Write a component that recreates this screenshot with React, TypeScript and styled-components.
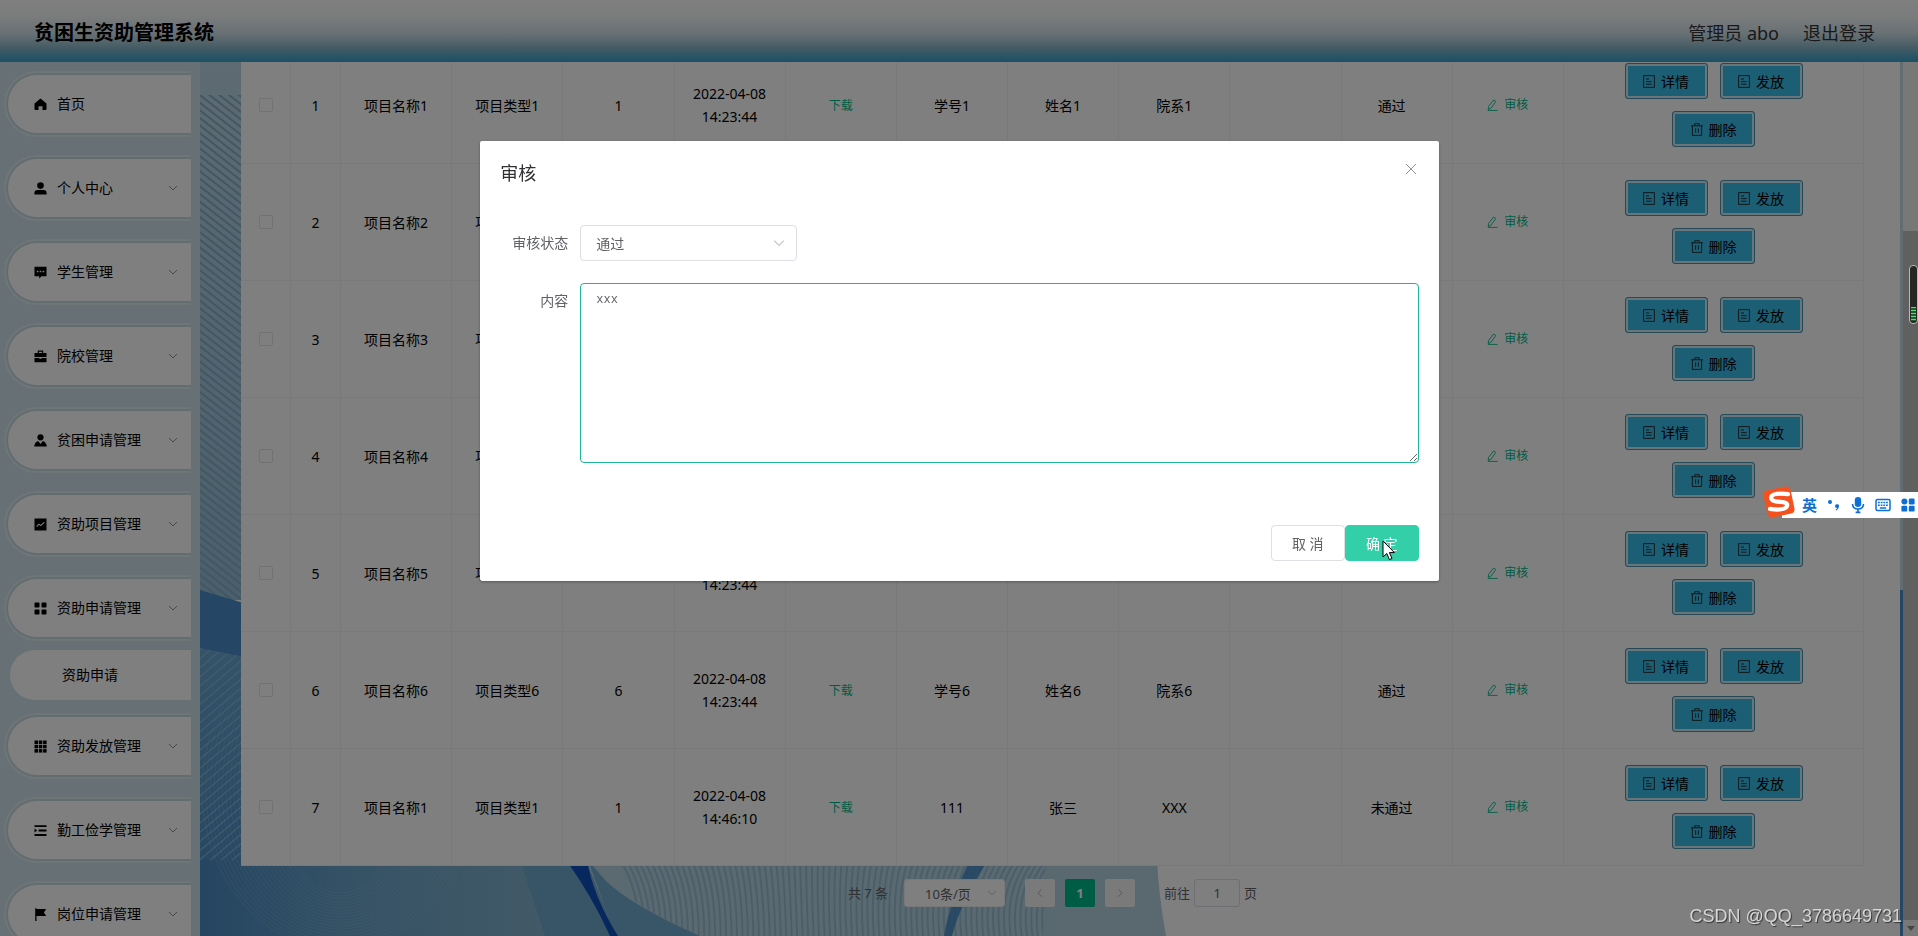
import React from 'react';
import styled, { createGlobalStyle, css } from 'styled-components';

const GlobalStyle = createGlobalStyle`
  *, *::before, *::after { box-sizing: border-box; }
  body {
    margin: 0;
    background: #fff;
    color: #000;
    font-family: "Noto Sans", "Noto Sans CJK SC", sans-serif;
    font-size: 14px;
    overflow: hidden;
  }
  button, input, select, textarea { font: inherit; color: inherit; margin: 0; }
  a { color: inherit; text-decoration: none; }
`;

/* ---------- frame ---------- */

const Shell = styled.div`
  display: flex;
  height: 100vh;
  overflow: hidden;
`;

const Header = styled.header`
  position: fixed;
  top: 0;
  left: 0;
  right: 0;
  z-index: 2;
  height: 62px;
  padding: 3px 43px 0 34px;
  display: flex;
  align-items: center;
  justify-content: space-between;
  background: linear-gradient(180deg, #fff 0%, #f4f6f7 28%, #d3e2e9 54%, #86b6c8 78%, #40a6c8 96%, #3aa4c8 100%);
`;

const Brand = styled.h1`
  margin: 0;
  font-size: 20px;
  line-height: 30px;
  font-weight: 700;
`;

const Account = styled.div`
  display: flex;
  gap: 24px;
  font-size: 18px;
  line-height: 30px;
  color: #333;
`;

const Sidebar = styled.nav`
  flex: 0 0 200px;
  padding: 71px 9px 0 4px;
  overflow: hidden;
  background: #cfe2ea;
`;

const Menu = styled.ul`
  list-style: none;
  margin: 0;
  padding: 0;
  display: flex;
  flex-direction: column;
  gap: 18px;
`;

const MenuRing = styled.div`
  padding: 2px 0 2px 2px;
  border: solid #dfecf1;
  border-width: 2px 0 2px 2px;
  border-radius: 33px 0 0 33px;
  background: #c6d8df;
`;

const MenuLink = styled.a`
  display: flex;
  align-items: center;
  height: 58px;
  padding: 0 13px 0 26px;
  border-radius: 29px 0 0 29px;
  background: #fff;
  svg { flex: none; }
`;

const MenuText = styled.span`
  flex: 1;
  margin-left: 10px;
  line-height: 22px;
`;

const SubLink = styled.a`
  display: flex;
  align-items: center;
  height: 50px;
  margin: 9px 0 -5px 6px;
  padding: 0 0 2px 52px;
  border-radius: 25px 0 0 25px;
  background: #fff;
`;

const Main = styled.main`
  position: relative;
  flex: 1;
  min-width: 0;
  padding: 47px 39px 0 41px;
`;

const Backdrop = styled.svg`
  position: absolute;
  inset: 0;
  width: 100%;
  height: 100%;
`;

const Content = styled.section`
  position: relative;
`;

/* ---------- table ---------- */

const Grid = styled.table`
  width: 100%;
  table-layout: fixed;
  border-collapse: separate;
  border-spacing: 0;
  background: #fff;
`;

const Col = styled.col<{ $w?: number }>`
  ${p => p.$w && css`width: ${p.$w}px;`}
`;

const Cell = styled.td`
  height: 117px;
  padding: 0 10px;
  border: solid #f1f2f4;
  border-width: 0 1px 1px 0;
  text-align: center;
  vertical-align: middle;
  line-height: 23px;
`;

const StatusCell = styled(Cell)`
  padding-right: 20px;
`;

const RowCheck = styled.input`
  appearance: none;
  display: block;
  width: 14px;
  height: 14px;
  margin: 0 auto;
  border: 1px solid #e2e4e8;
  border-radius: 2px;
  background: #fff;
`;

const TextButton = styled.button`
  display: inline-flex;
  align-items: center;
  gap: 5px;
  padding: 0;
  border: 0;
  background: none;
  font-size: 12px;
  line-height: 23px;
  color: #00b98a;
`;

const Actions = styled.div`
  display: flex;
  flex-wrap: wrap;
  justify-content: center;
  gap: 12px;
  padding: 0 40px;
`;

const ActionButton = styled.button`
  display: inline-flex;
  align-items: center;
  justify-content: center;
  gap: 6px;
  width: 83px;
  height: 36px;
  padding: 0;
  border: 1px solid #4b93ad;
  border-radius: 3px;
  background: #38bce9;
  box-shadow: inset 0 0 0 2px #d5eaf2;
`;

/* ---------- pagination ---------- */

const Pager = styled.div`
  display: flex;
  align-items: center;
  justify-content: center;
  padding-top: 13px;
  font-size: 13px;
  line-height: 28px;
  color: #606266;
`;

const SizeBox = styled.div`
  position: relative;
  display: flex;
  margin: 0 20px 0 16px;
`;

const SizeSelect = styled.select`
  appearance: none;
  width: 101px;
  height: 28px;
  padding: 0 0 0 20px;
  border: 1px solid #f0f0f0;
  border-radius: 3px;
  background: #fff;
`;

const ArrowSlot = styled.span<{ $right: number }>`
  position: absolute;
  top: 0;
  bottom: 0;
  right: ${p => p.$right}px;
  display: flex;
  align-items: center;
  pointer-events: none;
`;

const PageButton = styled.button<{ $active?: boolean }>`
  display: flex;
  align-items: center;
  justify-content: center;
  width: 30px;
  height: 28px;
  margin-right: 10px;
  padding: 0;
  border: 0;
  border-radius: 2px;
  background: ${p => (p.$active ? '#00ba8b' : '#f4f4f5')};
  color: ${p => (p.$active ? '#fff' : '#c0c4cc')};
  font-weight: 700;
`;

const Jump = styled.label`
  display: flex;
  align-items: center;
  gap: 4px;
  margin-left: 19px;
`;

const JumpInput = styled.input`
  width: 46px;
  height: 28px;
  padding: 0;
  border: 1px solid #dcdfe6;
  border-radius: 3px;
  background: #fff;
  text-align: center;
`;

/* ---------- scroll track ---------- */

const Track = styled.div`
  flex: 0 0 15px;
  margin-top: 62px;
  padding-top: 169px;
  display: flex;
  flex-direction: column;
  background: #f1f1f1;
`;

const Thumb = styled.div`
  flex: 1;
  background: #c1c1c1;
`;

const TrackEnd = styled.div`
  display: flex;
  align-items: center;
  justify-content: center;
  height: 16px;
`;

/* ---------- dialog ---------- */

const Mask = styled.div`
  position: fixed;
  inset: 0;
  z-index: 3;
  padding: 1px 0 0 1px;
  background: rgba(0, 0, 0, 0.5);
`;

const Dialog = styled.section`
  width: 50%;
  margin: 15vh auto 0;
  border-radius: 2px;
  background: #fff;
  box-shadow: 0 1px 3px rgba(0, 0, 0, 0.3);
`;

const DialogHead = styled.header`
  display: flex;
  justify-content: space-between;
  padding: 20px 20px 10px;
`;

const DialogTitle = styled.h2`
  margin: 0;
  font-size: 18px;
  line-height: 24px;
  font-weight: 400;
  color: #303133;
`;

const CloseButton = styled.button`
  display: flex;
  width: 16px;
  height: 16px;
  padding: 0;
  border: 0;
  background: none;
  color: #909399;
`;

const DialogBody = styled.form`
  display: flex;
  flex-direction: column;
  gap: 22px;
  padding: 30px 20px 52px;
  color: #606266;
`;

const Field = styled.div`
  display: flex;
`;

const FieldLabel = styled.label`
  flex: 0 0 80px;
  padding-right: 12px;
  text-align: right;
  line-height: 36px;
`;

const SelectBox = styled.div`
  position: relative;
  width: 217px;
`;

const StatusSelect = styled.select`
  appearance: none;
  width: 100%;
  height: 36px;
  padding: 0 15px;
  border: 1px solid #dcdfe6;
  border-radius: 4px;
  background: #fff;
`;

const Note = styled.textarea`
  flex: 1;
  display: block;
  height: 180px;
  padding: 6px 15px;
  border: 1px solid #1fb594;
  border-radius: 4px;
  outline: 0;
  resize: vertical;
  font-family: "Liberation Mono", monospace;
  font-size: 12px;
  line-height: 21px;
`;

const DialogFoot = styled.footer`
  display: flex;
  justify-content: flex-end;
  padding: 10px 20px 20px;
`;

const FootButton = styled.button<{ $primary?: boolean }>`
  width: 74px;
  height: 36px;
  padding: 0;
  border: 1px solid ${p => (p.$primary ? '#33cfa8' : '#dcdfe6')};
  border-radius: 4px;
  background: ${p => (p.$primary ? '#33cfa8' : '#fff')};
  color: ${p => (p.$primary ? '#fff' : '#606266')};
`;

/* ---------- floating desktop pieces ---------- */

const Pointer = styled.svg`
  position: fixed;
  left: 1382px;
  top: 540px;
  z-index: 5;
`;

const InputBar = styled.div`
  position: fixed;
  right: 0;
  top: 485px;
  z-index: 5;
  display: flex;
  align-items: flex-end;
`;

const InputLogo = styled.svg`
  position: relative;
  z-index: 1;
  margin-right: -14px;
`;

const InputTools = styled.div`
  display: flex;
  align-items: center;
  gap: 10px;
  height: 26px;
  margin-bottom: 1px;
  padding: 0 3px 0 20px;
  background: #fff;
  color: #0b6fd6;
  font-size: 15px;
  line-height: 26px;
  font-weight: 700;
`;

const Gauge = styled.div`
  position: fixed;
  right: 0;
  top: 265px;
  z-index: 5;
  width: 9px;
  height: 59px;
  padding: 41px 1px 1px;
  border: 1px solid #b8b8b8;
  border-radius: 4px;
  background: #262626;
`;

const GaugeFill = styled.div`
  height: 14px;
  background: repeating-linear-gradient(180deg, #5fd67a 0 1px, #1f5c2c 1px 3px);
`;

const Watermark = styled.div`
  position: fixed;
  right: 16px;
  bottom: 7px;
  z-index: 5;
  font-family: "Liberation Sans", sans-serif;
  font-size: 18px;
  line-height: 26px;
  color: rgba(225, 225, 225, 0.9);
  text-shadow: 1px 1px 1px rgba(0, 0, 0, 0.6);
`;

/* ---------- icons ---------- */

const menuShapes: Record<string, React.ReactNode> = {
  home: <path d="M6.5 0.5 L12.5 5.5 V11 Q12.5 12 11.5 12 H8.5 V8.2 H4.5 V12 H1.5 Q0.5 12 0.5 11 V5.5 Z" />,
  user: (
    <>
      <circle cx="6.5" cy="3.6" r="3.3" />
      <path d="M0.4 12.4 V11 Q0.4 8 3.6 8 H9.4 Q12.6 8 12.6 11 V12.4 Z" />
    </>
  ),
  comment: (
    <>
      <path d="M0.5 0.8 H12.5 V10.2 H7.4 L5.2 12.4 V10.2 H0.5 Z" />
      <path d="M2.8 4.7 h1.6 v1.6 h-1.6z M5.7 4.7 h1.6 v1.6 h-1.6z M8.6 4.7 h1.6 v1.6 h-1.6z" fill="#fff" />
    </>
  ),
  briefcase: (
    <path
      fillRule="evenodd"
      d="M3.8 0.6 H9.2 V3 H12.5 V7 H0.5 V3 H3.8 Z M4.9 1.7 V3 H8.1 V1.7 Z M0.5 7.9 H5.4 V8.8 H7.6 V7.9 H12.5 V12.2 H0.5 Z"
    />
  ),
  custom: (
    <>
      <circle cx="6.5" cy="3.3" r="3.1" />
      <path d="M0.2 12.5 Q0.6 8.2 4.2 7 L6.5 10 L8.8 7 Q12.4 8.2 12.8 12.5 Z" />
    </>
  ),
  marketing: (
    <>
      <path d="M0.5 0.5 H12.5 V12.5 H0.5 Z" />
      <path d="M2.6 8.6 L5 6.2 L6.8 7.6 L10.4 4.2" fill="none" stroke="#fff" strokeWidth="1.1" />
    </>
  ),
  menu: (
    <path d="M0.5 1.3q0-.8.8-.8h3.4q.8 0 .8.8v3.4q0 .8-.8.8h-3.4q-.8 0-.8-.8z M7.5 1.3q0-.8.8-.8h3.4q.8 0 .8.8v3.4q0 .8-.8.8h-3.4q-.8 0-.8-.8z M0.5 8.3q0-.8.8-.8h3.4q.8 0 .8.8v3.4q0 .8-.8.8h-3.4q-.8 0-.8-.8z M7.5 8.3q0-.8.8-.8h3.4q.8 0 .8.8v3.4q0 .8-.8.8h-3.4q-.8 0-.8-.8z" />
  ),
  grid: (
    <>
      {[0.5, 4.8, 9.1].map(y =>
        [0.5, 4.8, 9.1].map(x => <rect key={`${x}-${y}`} x={x} y={y} width="3.5" height="3.5" />),
      )}
    </>
  ),
  operation: <path d="M0.5 1.2h12v1.9h-12z M4.6 5.6h7.9v1.8h-7.9z M0.5 10h12v1.9h-12z M0.5 4.6 L3.2 6.5 L0.5 8.4z" />,
  flag: <path d="M1.2 0.2 h1.3 v0.8 H12.2 L9.9 4.4 L12.2 8 H2.5 V13 H1.2 Z" />,
};

const MenuIcon = ({ name }: { name: string }) => (
  <svg width="13" height="13" viewBox="0 0 13 13" aria-hidden="true">
    {menuShapes[name]}
  </svg>
);

const Chevron = ({ dir = 'down', size = 10, color = '#909399' }: { dir?: string; size?: number; color?: string }) => {
  const d = dir === 'down' ? 'M1 3 L5 7 L9 3' : dir === 'left' ? 'M6.5 1.5 L3 5 L6.5 8.5' : 'M3.5 1.5 L7 5 L3.5 8.5';
  return (
    <svg width={size} height={size} viewBox="0 0 10 10" fill="none" stroke={color} aria-hidden="true">
      <path d={d} />
    </svg>
  );
};

const DocIcon = () => (
  <svg width="12" height="13" viewBox="0 0 12 13" fill="none" stroke="#222" strokeWidth="0.9" aria-hidden="true">
    <path d="M0.6 0.6 H11.4 V12.4 H0.6 Z M3 4 H6 M3 6.6 H8.6 M3 9.2 H8.6" />
  </svg>
);

const BinIcon = () => (
  <svg width="12" height="13" viewBox="0 0 12 13" fill="none" stroke="#222" strokeWidth="0.9" aria-hidden="true">
    <path d="M0 2.8 H12 M3.8 2.6 V0.7 H8.2 V2.6 M1.4 2.8 V12.4 H10.6 V2.8 M4.6 5.4 V9.8 M7.4 5.4 V9.8" />
  </svg>
);

const PenIcon = () => (
  <svg width="12" height="12" viewBox="0 0 12 12" fill="none" stroke="currentColor" strokeWidth="0.9" aria-hidden="true">
    <path d="M6.6 1 L8.8 2.4 L4.2 9 L1.2 10.6 L1.6 7.4 Z M0.8 11.4 H10.6" />
  </svg>
);

/* ---------- page background ---------- */

const steps = (n: number) => Array.from({ length: n }, (_, i) => i);

const Waves = () => (
  <Backdrop aria-hidden="true">
    <defs>
      <linearGradient id="deep" x1="0" x2="1" y1="0" y2="0">
        <stop offset="0" stopColor="#4a8cc4" />
        <stop offset="0.35" stopColor="#6aa3ca" />
        <stop offset="1" stopColor="#8fbbd2" />
      </linearGradient>
      <linearGradient id="haze" x1="0" x2="0" y1="0" y2="1">
        <stop offset="0" stopColor="#c0d8e5" />
        <stop offset="1" stopColor="#94c0da" />
      </linearGradient>
      <linearGradient id="side" x1="0" x2="0" y1="0" y2="1">
        <stop offset="0" stopColor="#6aa8d2" />
        <stop offset="1" stopColor="#4a8cc4" />
      </linearGradient>
      <pattern id="hatch" width="7" height="6" patternUnits="userSpaceOnUse" patternTransform="rotate(38)">
        <rect width="7" height="2" y="2" fill="#86adc6" />
      </pattern>
      <pattern id="weave" width="7" height="7" patternUnits="userSpaceOnUse" patternTransform="rotate(-40)">
        <rect width="7" height="1" fill="#8cbcdb" />
      </pattern>
      <clipPath id="low">
        <path d="M410 860 H850 L840 1200 H520 L500 936 Q430 905 410 880 Z" />
      </clipPath>
    </defs>
    <rect width="100%" height="100%" fill="#fff" />
    <rect width="60" height="600" fill="url(#haze)" />
    <path d="M0 95 H60 V610 L0 590 Z" fill="url(#hatch)" />
    <path d="M0 590 L60 608 V1200 H0 Z" fill="#4a8fca" />
    <path d="M0 648 L60 660 V900 H0 Z" fill="url(#side)" />
    <path d="M0 648 L60 660 V900 H0 Z" fill="url(#weave)" />
    <rect y="860" width="420" height="400" fill="url(#deep)" />
    <g fill="none" stroke="#9cc6e0" strokeOpacity="0.25">
      {steps(20).map(i => (
        <ellipse key={i} cx="140" cy="790" rx={138 - i * 4} ry={160 - i * 3} />
      ))}
    </g>
    <path d="M320 860 H420 L470 1100 H400 L345 936 Z" fill="#70a8cf" />
    <path d="M386 860 H1100 V1200 H520 Z" fill="#b6d3e0" />
    <path d="M388 860 L415 936 L470 1100 H640 L500 936 Q430 905 405 880 Z" fill="#72acd2" />
    <path d="M366 860 L387 860 Q393 896 418 936 L410 936 Q392 896 366 860 Z" fill="#0f50be" />
    <g clipPath="url(#low)" fill="none" stroke="#8fbad2" strokeOpacity="0.8" strokeWidth="2">
      {steps(75).map(i => (
        <path key={i} d={`M${420 + i * 6} 860 q${22 - i * 0.7} 34 ${18 - i * 0.5} 84`} />
      ))}
    </g>
    <path d="M770 860 Q750 900 744 936 h8 Q760 904 788 860 Z" fill="#3f84c6" fillOpacity="0.8" />
    <path d="M846 860 H958 Q954 900 966 936 V1100 H836 Z" fill="#b4d0df" />
    <path d="M957 860 H1703 V1100 H1010 Q962 960 957 860 Z" fill="#fff" />
    <rect x="1700" width="3" height="590" fill="#c3dae6" />
    <rect x="1700" y="590" width="3" height="600" fill="#4a8fca" />
  </Backdrop>
);

/* ---------- data ---------- */

const menuItems = [
  { icon: 'home', text: '首页', leaf: true },
  { icon: 'user', text: '个人中心' },
  { icon: 'comment', text: '学生管理' },
  { icon: 'briefcase', text: '院校管理' },
  { icon: 'custom', text: '贫困申请管理' },
  { icon: 'marketing', text: '资助项目管理' },
  { icon: 'menu', text: '资助申请管理', sub: '资助申请' },
  { icon: 'grid', text: '资助发放管理' },
  { icon: 'operation', text: '勤工俭学管理' },
  { icon: 'flag', text: '岗位申请管理' },
];

const rows = [
  ...[1, 2, 3, 4, 5, 6].map(n => [
    `${n}`, `项目名称${n}`, `项目类型${n}`, `${n}`, '2022-04-08 14:23:44', `学号${n}`, `姓名${n}`, `院系${n}`, '', '通过',
  ]),
  ['7', '项目名称1', '项目类型1', '1', '2022-04-08 14:46:10', '111', '张三', 'XXX', '', '未通过'],
];

export default function App() {
  return (
    <>
      <GlobalStyle />
      <Header>
        <Brand>贫困生资助管理系统</Brand>
        <Account>
          <span>管理员 abo</span>
          <a href="#logout">退出登录</a>
        </Account>
      </Header>
      <Shell>
        <Sidebar>
          <Menu>
            {menuItems.map(item => (
              <li key={item.text}>
                <MenuRing>
                  <MenuLink href="#menu">
                    <MenuIcon name={item.icon} />
                    <MenuText>{item.text}</MenuText>
                    {!item.leaf && <Chevron />}
                  </MenuLink>
                </MenuRing>
                {item.sub && <SubLink href="#apply">{item.sub}</SubLink>}
              </li>
            ))}
          </Menu>
        </Sidebar>
        <Main>
          <Waves />
          <Content>
            <Grid>
              <colgroup>
                <Col $w={50} />
                <Col $w={50} />
                {rows[0].concat('').map((_, i) => (
                  <Col key={i} />
                ))}
                <Col $w={300} />
              </colgroup>
              <tbody>
                {rows.map(r => (
                  <tr key={r[0]}>
                    <Cell>
                      <RowCheck type="checkbox" aria-label={`选择 ${r[0]}`} />
                    </Cell>
                    {r.slice(0, 5).map((v, i) => (
                      <Cell key={i}>{v}</Cell>
                    ))}
                    <Cell>
                      <TextButton>下载</TextButton>
                    </Cell>
                    {r.slice(5, 9).map((v, i) => (
                      <Cell key={i}>{v}</Cell>
                    ))}
                    <StatusCell>{r[9]}</StatusCell>
                    <Cell>
                      <TextButton>
                        <PenIcon />
                        审核
                      </TextButton>
                    </Cell>
                    <Cell>
                      <Actions>
                        <ActionButton><DocIcon />详情</ActionButton>
                        <ActionButton><DocIcon />发放</ActionButton>
                        <ActionButton><BinIcon />删除</ActionButton>
                      </Actions>
                    </Cell>
                  </tr>
                ))}
              </tbody>
            </Grid>
            <Pager>
              <span>共 7 条</span>
              <SizeBox>
                <SizeSelect aria-label="每页条数">
                  <option>10条/页</option>
                </SizeSelect>
                <ArrowSlot $right={8}>
                  <Chevron color="#c0c4cc" />
                </ArrowSlot>
              </SizeBox>
              <PageButton aria-label="上一页"><Chevron dir="left" color="#b0b3b8" /></PageButton>
              <PageButton $active>1</PageButton>
              <PageButton aria-label="下一页"><Chevron dir="right" color="#b0b3b8" /></PageButton>
              <Jump>
                前往
                <JumpInput defaultValue="1" />
                页
              </Jump>
            </Pager>
          </Content>
        </Main>
        <Track aria-hidden="true">
          <Thumb />
          <TrackEnd>
            <svg width="8" height="5" viewBox="0 0 8 5"><path d="M0 0 H8 L4 5 Z" fill="#8a8a8a" /></svg>
          </TrackEnd>
        </Track>
      </Shell>

      <Mask>
        <Dialog role="dialog" aria-labelledby="dialog-title">
          <DialogHead>
            <DialogTitle id="dialog-title">审核</DialogTitle>
            <CloseButton aria-label="关闭">
              <svg width="16" height="16" viewBox="0 0 16 16" stroke="currentColor" fill="none">
                <path d="M3 3 L13 13 M13 3 L3 13" />
              </svg>
            </CloseButton>
          </DialogHead>
          <DialogBody>
            <Field>
              <FieldLabel htmlFor="status">审核状态</FieldLabel>
              <SelectBox>
                <StatusSelect id="status">
                  <option>通过</option>
                  <option>未通过</option>
                </StatusSelect>
                <ArrowSlot $right={12}>
                  <Chevron size={12} color="#c0c4cc" />
                </ArrowSlot>
              </SelectBox>
            </Field>
            <Field>
              <FieldLabel htmlFor="note">内容</FieldLabel>
              <Note
                id="note"
                defaultValue="xxx"
                autoFocus
                onFocus={e => e.currentTarget.setSelectionRange(3, 3)}
              />
            </Field>
          </DialogBody>
          <DialogFoot>
            <FootButton>取 消</FootButton>
            <FootButton $primary>确 定</FootButton>
          </DialogFoot>
        </Dialog>
      </Mask>

      <Pointer width="14" height="22" viewBox="0 0 14 22" aria-hidden="true">
        <path d="M1 1 V17 L4.8 13.5 L7.4 19.6 L10 18.5 L7.4 12.6 H12.4 Z" fill="#fff" stroke="#000" />
      </Pointer>
      <Gauge aria-hidden="true">
        <GaugeFill />
      </Gauge>
      <InputBar>
        <InputLogo width="34" height="34" viewBox="0 0 32 32" aria-hidden="true">
          <rect x="3" y="3" width="26" height="26" rx="4" fill="#f4511e" transform="rotate(-12 16 16)" />
          <path d="M24.5 8.5 Q9 7 8.5 12 Q8.5 15.5 17 15.8 Q25 16.2 23.5 20 Q21 24.5 7.5 22.5" fill="none" stroke="#fff" strokeWidth="4" strokeLinecap="round" />
        </InputLogo>
        <InputTools>
          <span>英</span>
          <svg width="14" height="16" viewBox="0 0 14 16" fill="currentColor" aria-hidden="true">
            <circle cx="3" cy="5" r="2" />
            <path d="M8 9.2 a2 2 0 1 1 3.9 0.6 q-0.4 2.8 -2.8 3.8 l-0.5 -1 q1.2 -0.6 1.4 -1.6 a2 2 0 0 1 -2 -1.8z" />
          </svg>
          <svg width="14" height="18" viewBox="0 0 14 18" fill="none" stroke="currentColor" strokeWidth="1.6" aria-hidden="true">
            <rect x="3.8" y="1" width="6.4" height="10" rx="3.2" fill="currentColor" stroke="none" />
            <path d="M1.5 8 Q1.8 13 7 13 Q12.2 13 12.5 8 M7 13 V16 M4.6 16.4 H9.4" />
          </svg>
          <svg width="16" height="14" viewBox="0 0 16 14" fill="none" stroke="currentColor" strokeWidth="1.5" aria-hidden="true">
            <rect x="1" y="1.5" width="14" height="11" rx="1.5" />
            <path d="M3 4.6 H13 M3 7.2 H13" strokeDasharray="1.8 0.9" />
            <path d="M4.8 10 H11.2" />
          </svg>
          <svg width="14" height="14" viewBox="0 0 14 14" fill="currentColor" aria-hidden="true">
            <circle cx="3.4" cy="3.4" r="3" />
            <rect x="7.8" y="0.6" width="5.8" height="5.8" rx="1.2" />
            <rect x="0.4" y="7.8" width="5.8" height="5.8" rx="1.2" />
            <rect x="7.8" y="7.8" width="5.8" height="5.8" rx="1.2" />
          </svg>
        </InputTools>
      </InputBar>
      <Watermark>CSDN @QQ_3786649731</Watermark>
    </>
  );
}
